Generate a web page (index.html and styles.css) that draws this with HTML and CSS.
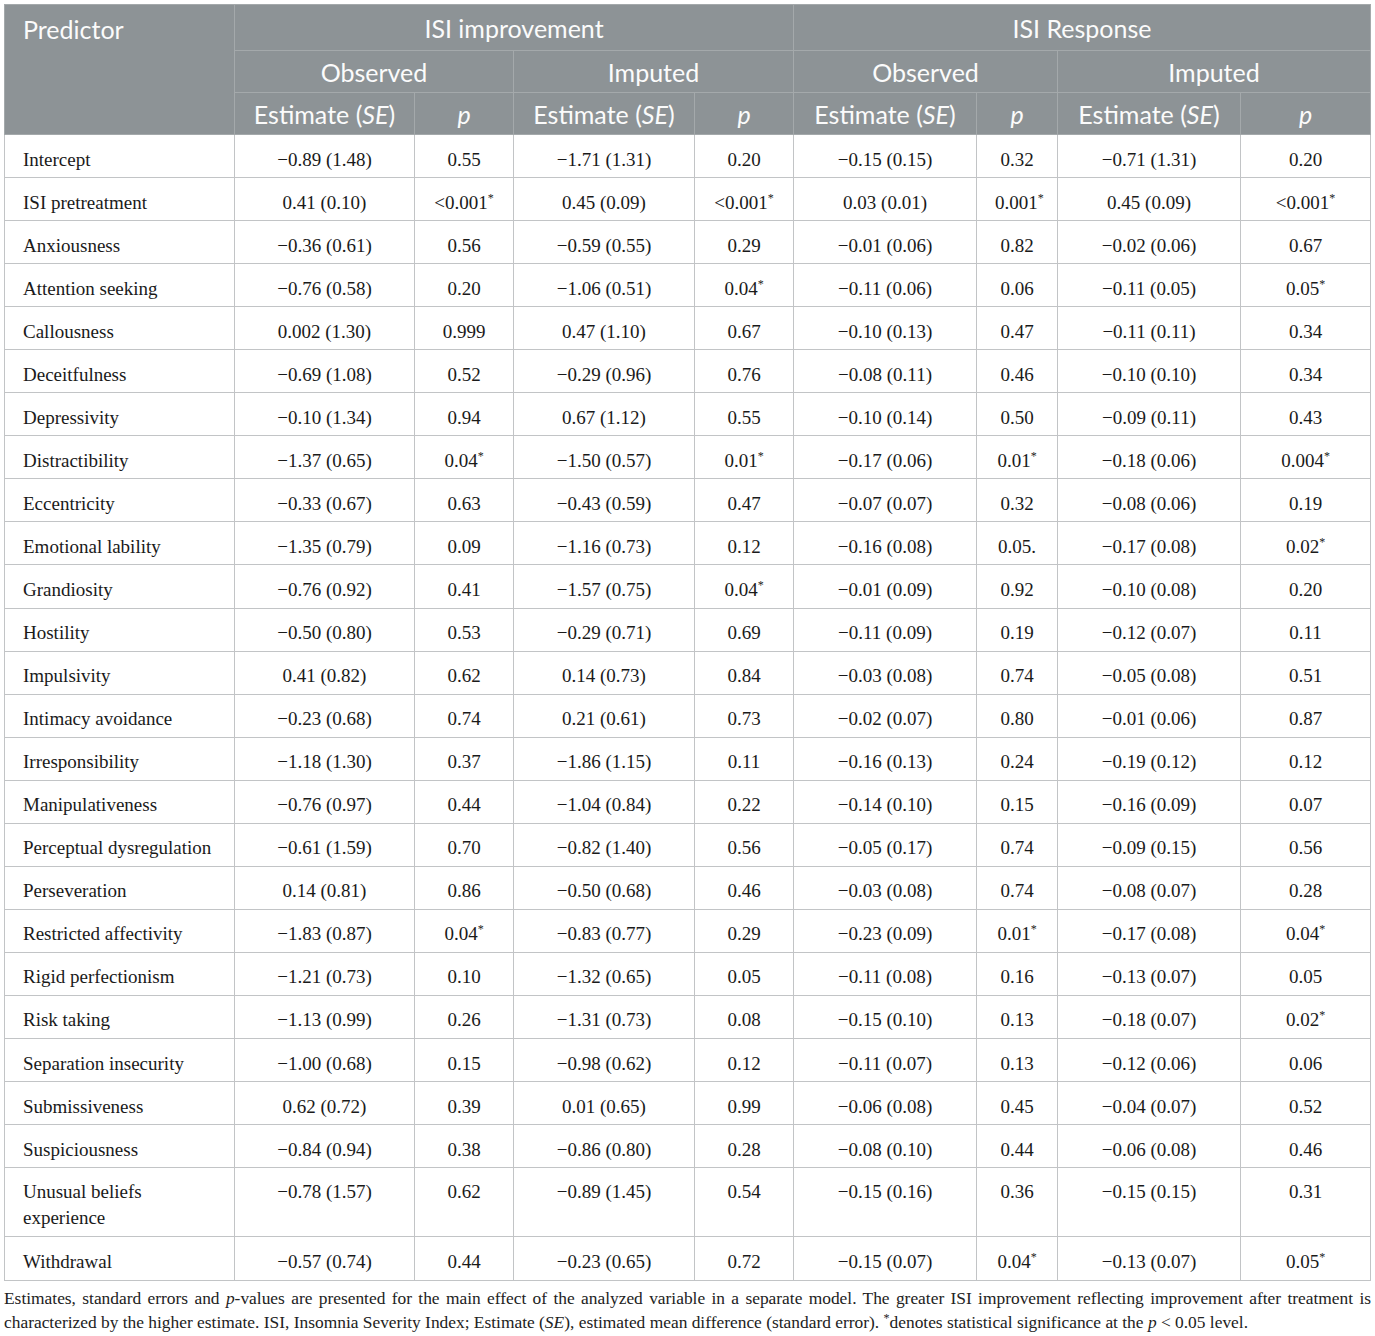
FILE: index.html
```html
<!DOCTYPE html>
<html lang="en">
<head>
  <meta charset="UTF-8" />
  <title>ISI predictors</title>
  <link rel="stylesheet" href="styles.css">
</head>
<body>

<table class="results">
  <colgroup>
    <col class="c-name">
    <col class="c-est"><col class="c-p">
    <col class="c-est2"><col class="c-p">
    <col class="c-est3"><col class="c-p2">
    <col class="c-est3"><col class="c-p3">
  </colgroup>
  <thead>
    <tr class="h1">
      <th rowspan="3" class="left">Predictor</th>
      <th colspan="4">ISI improvement</th>
      <th colspan="4">ISI Response</th>
    </tr>
    <tr class="h2">
      <th colspan="2">Observed</th>
      <th colspan="2">Imputed</th>
      <th colspan="2">Observed</th>
      <th colspan="2">Imputed</th>
    </tr>
    <tr class="h3">
      <th>Estimate (<i>SE</i>)</th><th><i>p</i></th>
      <th>Estimate (<i>SE</i>)</th><th><i>p</i></th>
      <th>Estimate (<i>SE</i>)</th><th><i>p</i></th>
      <th>Estimate (<i>SE</i>)</th><th><i>p</i></th>
    </tr>
  </thead>
  <tbody id="rows"></tbody>
</table>

<p class="note">
  Estimates, standard errors and <i>p</i>-values are presented for the main effect of the analyzed variable in a separate model. The greater ISI improvement reflecting improvement after treatment is characterized by the higher estimate. ISI, Insomnia Severity Index; Estimate (<i>SE</i>), estimated mean difference (standard error). <sup>*</sup>denotes statistical significance at the <i>p</i> &lt; 0.05 level.
</p>

<script>
  const data = [
    ['Intercept', '−0.89 (1.48)', '0.55', '−1.71 (1.31)', '0.20', '−0.15 (0.15)', '0.32', '−0.71 (1.31)', '0.20'],
    ['ISI pretreatment', '0.41 (0.10)', '&lt;0.001*', '0.45 (0.09)', '&lt;0.001*', '0.03 (0.01)', '0.001*', '0.45 (0.09)', '&lt;0.001*'],
    ['Anxiousness', '−0.36 (0.61)', '0.56', '−0.59 (0.55)', '0.29', '−0.01 (0.06)', '0.82', '−0.02 (0.06)', '0.67'],
    ['Attention seeking', '−0.76 (0.58)', '0.20', '−1.06 (0.51)', '0.04*', '−0.11 (0.06)', '0.06', '−0.11 (0.05)', '0.05*'],
    ['Callousness', '0.002 (1.30)', '0.999', '0.47 (1.10)', '0.67', '−0.10 (0.13)', '0.47', '−0.11 (0.11)', '0.34'],
    ['Deceitfulness', '−0.69 (1.08)', '0.52', '−0.29 (0.96)', '0.76', '−0.08 (0.11)', '0.46', '−0.10 (0.10)', '0.34'],
    ['Depressivity', '−0.10 (1.34)', '0.94', '0.67 (1.12)', '0.55', '−0.10 (0.14)', '0.50', '−0.09 (0.11)', '0.43'],
    ['Distractibility', '−1.37 (0.65)', '0.04*', '−1.50 (0.57)', '0.01*', '−0.17 (0.06)', '0.01*', '−0.18 (0.06)', '0.004*'],
    ['Eccentricity', '−0.33 (0.67)', '0.63', '−0.43 (0.59)', '0.47', '−0.07 (0.07)', '0.32', '−0.08 (0.06)', '0.19'],
    ['Emotional lability', '−1.35 (0.79)', '0.09', '−1.16 (0.73)', '0.12', '−0.16 (0.08)', '0.05.', '−0.17 (0.08)', '0.02*'],
    ['Grandiosity', '−0.76 (0.92)', '0.41', '−1.57 (0.75)', '0.04*', '−0.01 (0.09)', '0.92', '−0.10 (0.08)', '0.20'],
    ['Hostility', '−0.50 (0.80)', '0.53', '−0.29 (0.71)', '0.69', '−0.11 (0.09)', '0.19', '−0.12 (0.07)', '0.11'],
    ['Impulsivity', '0.41 (0.82)', '0.62', '0.14 (0.73)', '0.84', '−0.03 (0.08)', '0.74', '−0.05 (0.08)', '0.51'],
    ['Intimacy avoidance', '−0.23 (0.68)', '0.74', '0.21 (0.61)', '0.73', '−0.02 (0.07)', '0.80', '−0.01 (0.06)', '0.87'],
    ['Irresponsibility', '−1.18 (1.30)', '0.37', '−1.86 (1.15)', '0.11', '−0.16 (0.13)', '0.24', '−0.19 (0.12)', '0.12'],
    ['Manipulativeness', '−0.76 (0.97)', '0.44', '−1.04 (0.84)', '0.22', '−0.14 (0.10)', '0.15', '−0.16 (0.09)', '0.07'],
    ['Perceptual dysregulation', '−0.61 (1.59)', '0.70', '−0.82 (1.40)', '0.56', '−0.05 (0.17)', '0.74', '−0.09 (0.15)', '0.56'],
    ['Perseveration', '0.14 (0.81)', '0.86', '−0.50 (0.68)', '0.46', '−0.03 (0.08)', '0.74', '−0.08 (0.07)', '0.28'],
    ['Restricted affectivity', '−1.83 (0.87)', '0.04*', '−0.83 (0.77)', '0.29', '−0.23 (0.09)', '0.01*', '−0.17 (0.08)', '0.04*'],
    ['Rigid perfectionism', '−1.21 (0.73)', '0.10', '−1.32 (0.65)', '0.05', '−0.11 (0.08)', '0.16', '−0.13 (0.07)', '0.05'],
    ['Risk taking', '−1.13 (0.99)', '0.26', '−1.31 (0.73)', '0.08', '−0.15 (0.10)', '0.13', '−0.18 (0.07)', '0.02*'],
    ['Separation insecurity', '−1.00 (0.68)', '0.15', '−0.98 (0.62)', '0.12', '−0.11 (0.07)', '0.13', '−0.12 (0.06)', '0.06'],
    ['Submissiveness', '0.62 (0.72)', '0.39', '0.01 (0.65)', '0.99', '−0.06 (0.08)', '0.45', '−0.04 (0.07)', '0.52'],
    ['Suspiciousness', '−0.84 (0.94)', '0.38', '−0.86 (0.80)', '0.28', '−0.08 (0.10)', '0.44', '−0.06 (0.08)', '0.46'],
    ['Unusual beliefs<br>experience', '−0.78 (1.57)', '0.62', '−0.89 (1.45)', '0.54', '−0.15 (0.16)', '0.36', '−0.15 (0.15)', '0.31'],
    ['Withdrawal', '−0.57 (0.74)', '0.44', '−0.23 (0.65)', '0.72', '−0.15 (0.07)', '0.04*', '−0.13 (0.07)', '0.05*']
  ];

  const body = document.getElementById('rows');
  data.forEach(row => {
    const tr = document.createElement('tr');
    if (row[0].includes('<br>')) tr.className = 'tall';
    tr.innerHTML = row.map((cell, i) => {
      const html = cell.replace(/\*$/, '<sup>*</sup>');
      return i === 0 ? `<td class="left">${html}</td>` : `<td>${html}</td>`;
    }).join('');
    body.appendChild(tr);
  });
</script>

</body>
</html>
```

FILE: styles.css
```css
body {
  margin: 4px;
  background: #fff;
  color: #1a1a1a;
  font-family: 'Liberation Serif', serif;
}

.results {
  border-collapse: collapse;
  table-layout: fixed;
  width: 1366px;
  border: 1px solid #b9bcbe;
}

.c-name { width: 230px; }
.c-est { width: 180px; }
.c-p { width: 99px; }
.c-est2 { width: 181px; }
.c-est3 { width: 183px; }
.c-p2 { width: 81px; }
.c-p3 { width: 130px; }

thead th {
  background: #8d9396;
  color: #fbfbfb;
  font-family: 'Lato', 'Open Sans', sans-serif;
  font-weight: normal;
  font-size: 25px;
  line-height: 30px;
  text-align: center;
  vertical-align: middle;
  white-space: nowrap;
  border: 1px solid #a4a9ab;
  padding: 0 6px;
}

thead th i {
  font-style: italic;
}

thead th.left {
  text-align: left;
  vertical-align: top;
  padding: 9px 18px 0;
}

.h1 th { height: 45px; }
.h2 th { height: 41px; }
.h3 th { height: 41px; }

tbody td {
  border: 1px solid #c2c4c6;
  height: 35.05px;
  padding: 7px 18px 0;
  text-align: center;
  font-size: 19px;
  line-height: 26px;
}

tbody td.left {
  text-align: left;
}

tbody tr.tall td {
  vertical-align: top;
  height: 57px;
  padding-top: 11px;
}

tbody tr:last-child td {
  height: 36px;
}

sup {
  font-size: 12px;
  vertical-align: top;
  line-height: 16px;
}

.note {
  margin: 5px 0 0;
  font-size: 17.4px;
  line-height: 24px;
  text-align: justify;
  color: #222;
}
```
